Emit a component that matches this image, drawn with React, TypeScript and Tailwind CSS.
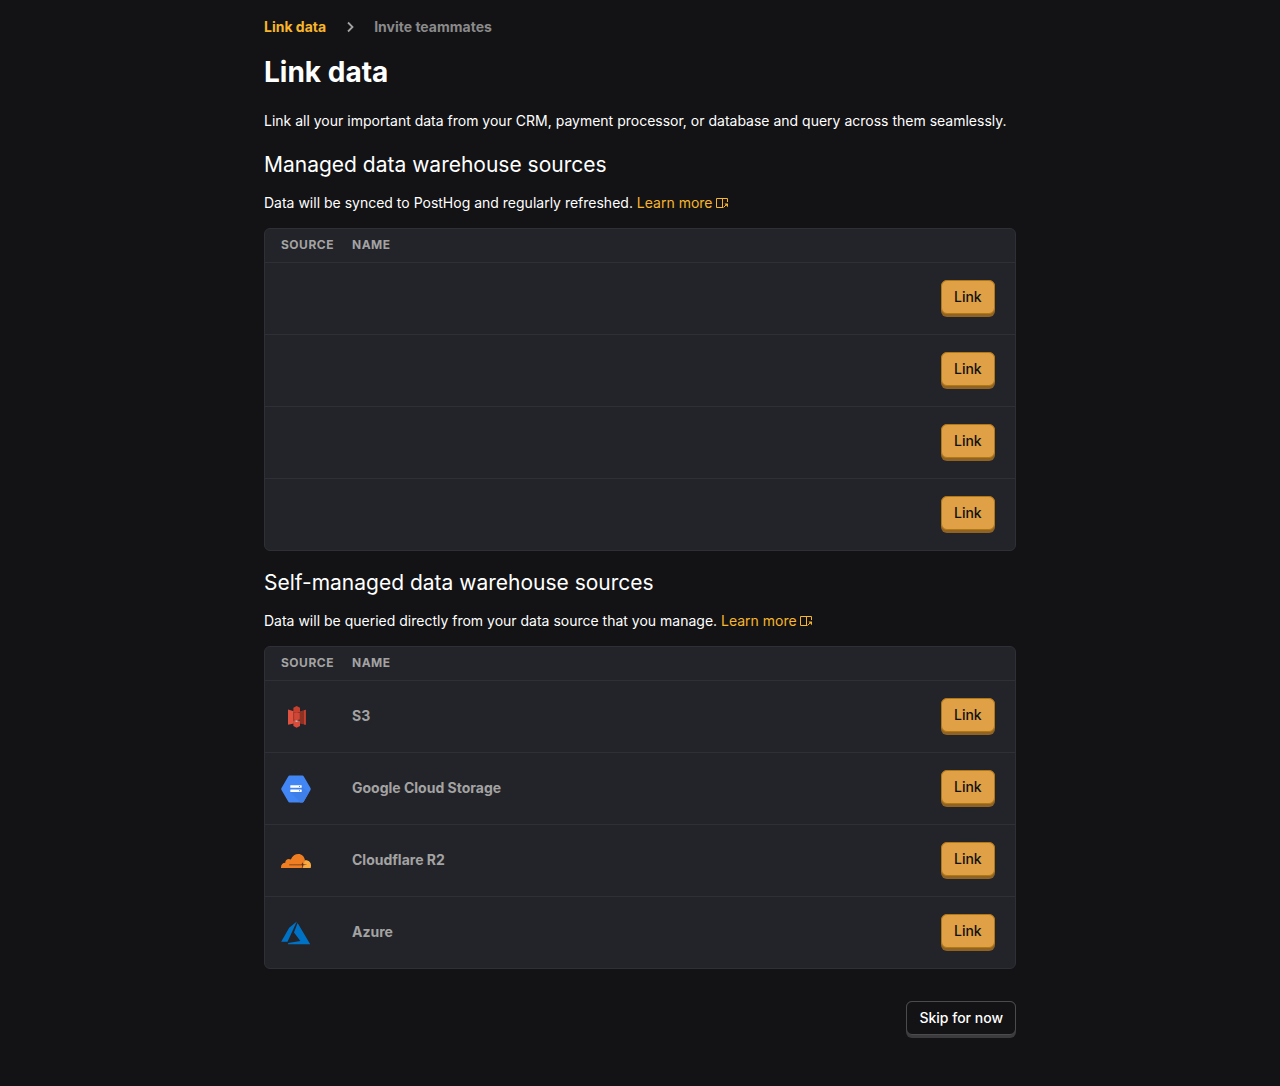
import type { ReactNode } from 'react'

type Source = { id: string; name?: string; icon?: ReactNode }

function S3Icon() {
  return (
    <svg viewBox="0 0 30 30" className="size-[30px]" aria-hidden="true">
      <path d="m7 7.6 5.8 1.6v12.4L7 22.8z" fill="#e0523f" />
      <path d="m24.8 7.8-6.4 1.6v12.2l6.4 1.2z" fill="#8e3123" />
      <path d="m24.8 7.8-1.7.4v14.2l1.7.4z" fill="#c94434" />
      <path d="M15.6 4 19 5.8v4.4l-3.4.8-3.2-.8V5.8z" fill="#c5402f" />
      <path d="M12 10h3.6v9H12z" fill="#a53828" />
      <path d="M15.6 10.6 18.8 11v6.6l-3.2.6-2.4-.6V11z" fill="#d04636" />
      <path d="m12.4 19 3.2.8 3.4-.8v5l-3.4 1.8-3.2-1.8z" fill="#d94b3b" />
      <path d="m12.8 19 2.8-.8 3 .8-3 .9z" fill="#efaaa0" />
    </svg>
  )
}

function GoogleCloudIcon() {
  return (
    <svg viewBox="0 0 30 30" className="size-[30px]" aria-hidden="true">
      <path
        d="M8.7 1.6h12.6c.7 0 1.2.3 1.5.9l6.7 11.6c.3.6.3 1.2 0 1.8l-6.7 11.6c-.3.6-.8.9-1.5.9H8.7c-.7 0-1.2-.3-1.5-.9L.5 15.9a1.8 1.8 0 0 1 0-1.8L7.2 2.5c.3-.6.8-.9 1.5-.9z"
        fill="#4285f4"
      />
      <path d="m20.2 11.6 7.4 7.5-4.8 8.4c-.3.6-.8.9-1.5.9h-2.1l-9.4-10.2z" fill="#3f7fe9" />
      <rect x="9.3" y="11.2" width="11.4" height="2.6" rx=".4" fill="#fff" />
      <rect x="9.3" y="15.4" width="11.4" height="2.6" rx=".4" fill="#fff" />
      <path d="M18 12h1v1h-1zm0 4.2h1v1h-1z" fill="#4285f4" />
    </svg>
  )
}

function CloudflareIcon() {
  return (
    <svg viewBox="0 0 30 30" className="size-[30px]" aria-hidden="true">
      <path d="M23.3 14.5c3.8-.8 6.7 1.5 6.7 5.1 0 1-.1 2.4-.5 2.4h-8.8z" fill="#f9ab41" />
      <path
        d="M0 22c-.2-3.2 1.4-5 4.3-5.2-.2-3.1 3-4.8 5.5-3.2C11.6 9.7 14.2 8 17.3 8c3.5 0 6.1 2.5 6.6 6.1l-1.8 7.9z"
        fill="#ef7d22"
      />
      <path d="M8.2 18.5h12.3l1-2.3.7 2.1 4.2.4-4.2.5-.8 2.8h-.6l.4-2.8H8.2z" fill="#5a341d" />
    </svg>
  )
}

function AzureIcon() {
  return (
    <svg viewBox="0 0 30 30" className="size-[30px]" aria-hidden="true">
      <path d="M15.8 3.4 8.2 9.8.2 23.8h6.3z" fill="#0072c6" />
      <path d="m16.6 4.9-3.6 9.7 6.4 8.4L7.2 25v1.2h22z" fill="#0072c6" />
    </svg>
  )
}

function OpenIcon() {
  return (
    <svg
      viewBox="0 0 14 14"
      className="ml-0.5 inline-block size-3.5 align-[-2px]"
      fill="none"
      stroke="currentColor"
      aria-hidden="true"
    >
      <path d="M12.5 6V2.5h-11v9h7M7.5 2.5v9" />
      <path d="m8.8 11.2 2.8-2.8" />
      <path d="M9.4 7.6H13v3.6z" fill="currentColor" stroke="none" />
    </svg>
  )
}

const managed: Source[] = [{ id: 'a' }, { id: 'b' }, { id: 'c' }, { id: 'd' }]

const selfManaged: Source[] = [
  { id: 's3', name: 'S3', icon: <S3Icon /> },
  { id: 'gcs', name: 'Google Cloud Storage', icon: <GoogleCloudIcon /> },
  { id: 'r2', name: 'Cloudflare R2', icon: <CloudflareIcon /> },
  { id: 'azure', name: 'Azure', icon: <AzureIcon /> },
]

function LinkButton() {
  return (
    <button type="button" className="block rounded-md bg-[#906323] pb-[3px] text-sm font-medium text-[#111]">
      <span className="flex h-[34px] items-center rounded-md border border-[#b17816] bg-[#e0a045] px-3 leading-6">Link</span>
    </button>
  )
}

function SourceTable({ label, sources }: { label: string; sources: Source[] }) {
  return (
    <div className="overflow-hidden rounded-md border border-[#2f3037] bg-[#232429]">
      <table aria-label={label} className="w-full border-collapse text-left">
        <thead>
          <tr className="h-[33px] text-xs font-bold tracking-[0.5px] text-[#a3a3a3]">
            <th scope="col" className="w-[79px] pl-4">SOURCE</th>
            <th scope="col" className="pl-2">NAME</th>
            <th scope="col" aria-label="Action" />
          </tr>
        </thead>
        <tbody>
          {sources.map((s) => (
            <tr key={s.id} className="h-[72px] border-t border-[#2f3037]">
              <td className="pt-0.5 pl-4">{s.icon}</td>
              <td className="pl-2 text-sm font-bold text-[#a3a3a3]">{s.name}</td>
              <td className="w-[74px] pr-5">
                <LinkButton />
              </td>
            </tr>
          ))}
        </tbody>
      </table>
    </div>
  )
}

function Section({ title, text, sources }: { title: string; text: string; sources: Source[] }) {
  return (
    <section className="mt-4">
      <h2 className="mb-3 text-[21px] leading-8">{title}</h2>
      <p className="mb-[15px] leading-5">
        {text}{' '}
        <a href="#docs" className="text-[#f7b62b]">
          Learn more
          <OpenIcon />
        </a>
      </p>
      <SourceTable label={title} sources={sources} />
    </section>
  )
}

export default function App() {
  return (
    <div className="min-h-screen bg-[#131315] px-4 pt-4 pb-12 font-['Inter',sans-serif] text-sm text-white">
      <main className="mx-auto max-w-[752px]">
        <nav aria-label="Steps" className="flex items-center gap-4 text-sm leading-[22px] font-bold">
          <a href="#link" className="text-[#f7b62b]">Link data</a>
          <svg viewBox="0 0 16 16" className="size-4 text-[#a3a3a3]" fill="none" stroke="currentColor" strokeWidth="1.8" aria-hidden="true">
            <path d="m6 3.5 4.5 4.5L6 12.5" />
          </svg>
          <a href="#invite" className="text-[#8a8a8b]">Invite teammates</a>
        </nav>
        <h1 className="mt-4 text-[28px] leading-9 font-bold">Link data</h1>
        <p className="mt-[19px] leading-6">
          Link all your important data from your CRM, payment processor, or database and query across them seamlessly.
        </p>
        <Section title="Managed data warehouse sources" text="Data will be synced to PostHog and regularly refreshed." sources={managed} />
        <Section
          title="Self-managed data warehouse sources"
          text="Data will be queried directly from your data source that you manage."
          sources={selfManaged}
        />
        <div className="mt-8 flex justify-end">
          <button type="button" className="rounded-md bg-[#3b3b3d] pb-[3px] font-medium">
            <span className="flex h-[34px] items-center rounded-md border border-[#4b4b4d] bg-[#131315] px-3">Skip for now</span>
          </button>
        </div>
      </main>
    </div>
  )
}
